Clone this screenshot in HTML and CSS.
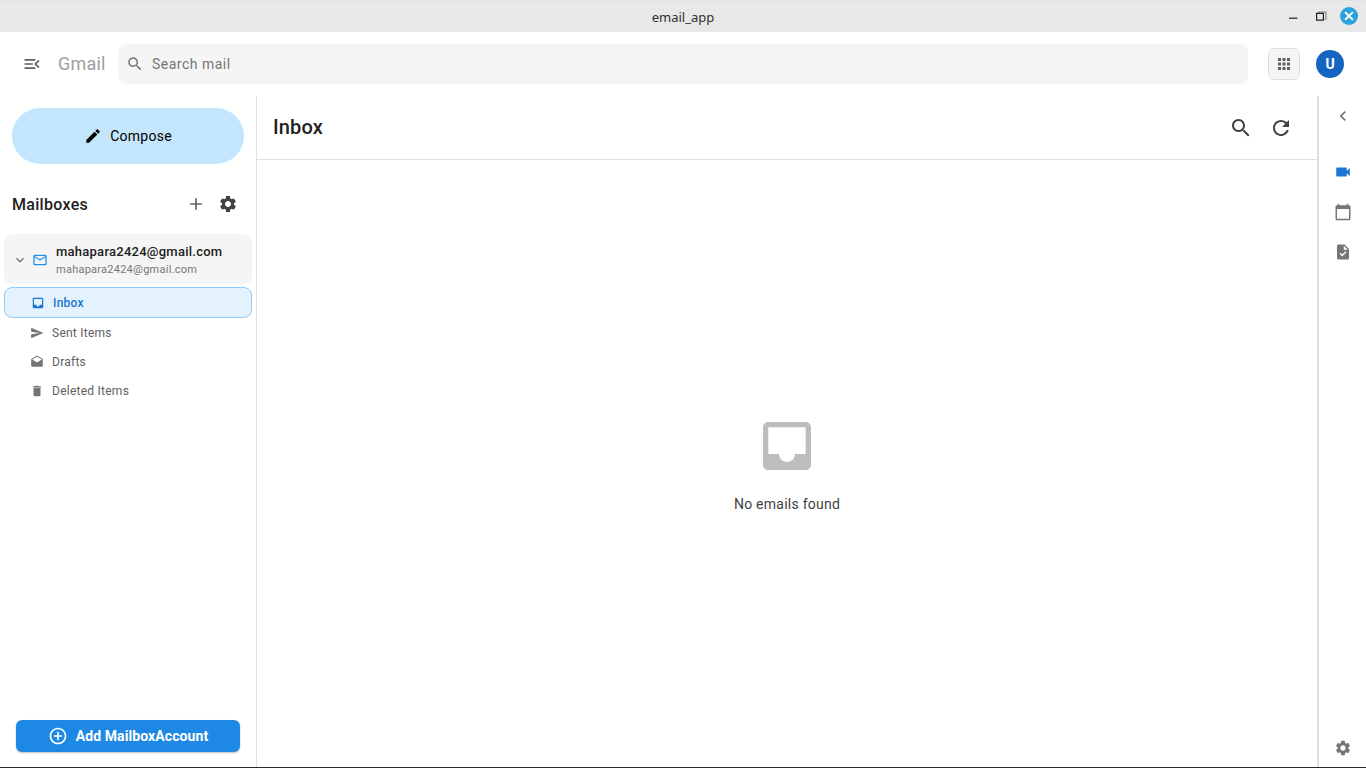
FILE: index.html
```html
<!DOCTYPE html>
<html lang="en">
<head>
    <meta charset="UTF-8">
    <meta name="viewport" content="width=device-width, initial-scale=1.0">
    <title>email_app</title>
    <link rel="stylesheet" href="styles.css">
</head>
<body>
    <div class="titlebar">
        <div class="title">email_app</div>
        <div class="window-controls">
            <svg class="win-icon" viewBox="0 0 16 16"><path d="M4 9.6h8.4v1.2H4z"/></svg>
            <svg class="win-icon" viewBox="0 0 16 16"><path d="M5.5 3.5h8v8h-2v-1h1v-6h-6v.5h-1z" fill="#777"/><path d="M3 4.8h8v8H3zM4.2 6v5.6h5.6V6z" fill-rule="evenodd"/></svg>
            <div class="win-close">
                <svg viewBox="0 0 24 24"><path d="M19 6.41L17.59 5 12 10.59 6.41 5 5 6.41 10.59 12 5 17.59 6.41 19 12 13.41 17.59 19 19 17.59 13.41 12z"/></svg>
            </div>
        </div>
    </div>

    <header class="appbar">
        <svg class="menu-icon" viewBox="0 0 24 24"><path d="M3 18h13v-2H3v2zm0-5h10v-2H3v2zm0-7v2h13V6H3zm18 9.59L17.42 12 21 8.41 19.59 7l-5 5 5 5L21 15.59z"/></svg>
        <div class="brand">Gmail</div>
        <div class="searchbox">
            <svg class="search-icon" viewBox="0 0 24 24"><path d="M15.5 14h-.79l-.28-.27C15.41 12.59 16 11.11 16 9.5 16 5.91 13.09 3 9.5 3S3 5.91 3 9.5 5.91 16 9.5 16c1.61 0 3.09-.59 4.23-1.57l.27.28v.79l5 4.99L20.49 19l-4.99-5zm-6 0C7.01 14 5 11.99 5 9.5S7.01 5 9.5 5 14 7.01 14 9.5 11.99 14 9.5 14z"/></svg>
            <span>Search mail</span>
        </div>
        <div class="apps-button">
            <svg viewBox="0 0 24 24"><path d="M4 8h4V4H4v4zm6 12h4v-4h-4v4zm-6 0h4v-4H4v4zm0-6h4v-4H4v4zm6 0h4v-4h-4v4zm6-10v4h4V4h-4zm-6 4h4V4h-4v4zm6 6h4v-4h-4v4zm0 6h4v-4h-4v4z"/></svg>
        </div>
        <div class="avatar">U</div>
    </header>

    <div class="content">
        <aside class="sidebar">
            <div class="compose">
                <svg viewBox="0 0 24 24"><path d="M3 17.25V21h3.75L17.81 9.94l-3.75-3.75L3 17.25zM20.71 7.04c.39-.39.39-1.02 0-1.41l-2.34-2.34c-.39-.39-1.02-.39-1.41 0l-1.83 1.83 3.75 3.75 1.83-1.83z"/></svg>
                <span>Compose</span>
            </div>

            <div class="mailboxes-head">
                <div class="mailboxes-title">Mailboxes</div>
                <svg class="head-icon head-add" viewBox="0 0 24 24"><path d="M19 13h-6v6h-2v-6H5v-2h6V5h2v6h6v2z"/></svg>
                <svg class="head-icon" viewBox="0 0 24 24"><path d="M19.14 12.94c.04-.3.06-.61.06-.94 0-.32-.02-.64-.07-.94l2.03-1.58c.18-.14.23-.41.12-.61l-1.92-3.32c-.12-.22-.37-.29-.59-.22l-2.39.96c-.5-.38-1.03-.7-1.62-.94l-.36-2.54c-.04-.24-.24-.41-.48-.41h-3.84c-.24 0-.43.17-.47.41l-.36 2.54c-.59.24-1.13.57-1.62.94l-2.39-.96c-.22-.08-.47 0-.59.22L2.74 8.87c-.12.21-.08.47.12.61l2.03 1.58c-.05.3-.09.63-.09.94s.02.64.07.94l-2.03 1.58c-.18.14-.23.41-.12.61l1.92 3.32c.12.22.37.29.59.22l2.39-.96c.5.38 1.03.7 1.62.94l.36 2.54c.05.24.24.41.48.41h3.84c.24 0 .44-.17.47-.41l.36-2.54c.59-.24 1.13-.56 1.62-.94l2.39.96c.22.08.47 0 .59-.22l1.92-3.32c.12-.22.07-.47-.12-.61l-2.01-1.58zM12 15.6c-1.98 0-3.6-1.62-3.6-3.6s1.62-3.6 3.6-3.6 3.6 1.62 3.6 3.6-1.62 3.6-3.6 3.6z"/></svg>
            </div>

            <div class="account">
                <svg class="account-chevron" viewBox="0 0 24 24"><path d="M16.59 8.59L12 13.17 7.41 8.59 6 10l6 6 6-6z"/></svg>
                <svg class="account-mail" viewBox="0 0 24 24"><path d="M20 4H4c-1.1 0-1.99.9-1.99 2L2 18c0 1.1.9 2 2 2h16c1.1 0 2-.9 2-2V6c0-1.1-.9-2-2-2zm0 14H4V8l8 5 8-5v10zm-8-7L4 6h16l-8 5z"/></svg>
                <div class="account-text">
                    <div class="account-name">mahapara2424@gmail.com</div>
                    <div class="account-email">mahapara2424@gmail.com</div>
                </div>
            </div>

            <div class="folder-active">
                <svg viewBox="0 0 24 24"><path d="M19 3H4.99c-1.11 0-1.98.89-1.98 2L3 19c0 1.1.88 2 1.99 2H19c1.1 0 2-.9 2-2V5c0-1.11-.9-2-2-2zm0 12h-4c0 1.66-1.35 3-3 3s-3-1.34-3-3H4.99V5H19v10z"/></svg>
                <span>Inbox</span>
            </div>
            <ul class="folders">
                <li>
                    <svg viewBox="0 0 24 24"><path d="M2.01 21L23 12 2.01 3 2 10l15 2-15 2z"/></svg>
                    <span>Sent Items</span>
                </li>
                <li>
                    <svg viewBox="0 0 24 24"><path d="M21.99 8c0-.72-.37-1.35-.94-1.7L12 1 2.95 6.3C2.38 6.65 2 7.28 2 8v10c0 1.1.9 2 2 2h16c1.1 0 2-.9 2-2l-.01-10zM12 13L3.74 7.84 12 3l8.26 4.84L12 13z"/></svg>
                    <span>Drafts</span>
                </li>
                <li>
                    <svg viewBox="0 0 24 24"><path d="M6 19c0 1.1.9 2 2 2h8c1.1 0 2-.9 2-2V7H6v12zM19 4h-3.5l-1-1h-5l-1 1H5v2h14V4z"/></svg>
                    <span>Deleted Items</span>
                </li>
            </ul>

            <div class="add-account">
                <svg viewBox="0 0 24 24"><path d="M13 7h-2v4H7v2h4v4h2v-4h4v-2h-4V7zm-1-5C6.48 2 2 6.48 2 12s4.48 10 10 10 10-4.48 10-10S17.52 2 12 2zm0 18c-4.41 0-8-3.59-8-8s3.59-8 8-8 8 3.59 8 8-3.59 8-8 8z"/></svg>
                <span>Add MailboxAccount</span>
            </div>
        </aside>

        <main class="main">
            <div class="main-head">
                <h1>Inbox</h1>
                <svg class="icon" viewBox="0 0 24 24"><path d="M15.5 14h-.79l-.28-.27C15.41 12.59 16 11.11 16 9.5 16 5.91 13.09 3 9.5 3S3 5.91 3 9.5 5.91 16 9.5 16c1.61 0 3.09-.59 4.23-1.57l.27.28v.79l5 4.99L20.49 19l-4.99-5zm-6 0C7.01 14 5 11.99 5 9.5S7.01 5 9.5 5 14 7.01 14 9.5 11.99 14 9.5 14z"/></svg>
                <svg class="icon" viewBox="0 0 24 24"><path d="M17.65 6.35C16.2 4.9 14.21 4 12 4c-4.42 0-7.99 3.58-7.99 8s3.57 8 7.99 8c3.73 0 6.84-2.55 7.73-6h-2.08c-.82 2.33-3.04 4-5.65 4-3.31 0-6-2.69-6-6s2.69-6 6-6c1.66 0 3.14.69 4.22 1.78L13 11h7V4l-2.35 2.35z"/></svg>
            </div>
            <div class="empty">
                <svg viewBox="0 0 24 24"><path d="M19 3H4.99c-1.11 0-1.98.89-1.98 2L3 19c0 1.1.88 2 1.99 2H19c1.1 0 2-.9 2-2V5c0-1.11-.9-2-2-2zm0 12h-4c0 1.66-1.35 3-3 3s-3-1.34-3-3H4.99V5H19v10z"/></svg>
                <div>No emails found</div>
            </div>
        </main>

        <aside class="rail">
            <svg class="rail-back" viewBox="0 0 24 24"><path d="M15.41 7.41L14 6l-6 6 6 6 1.41-1.41L10.83 12z"/></svg>
            <svg class="rail-video" viewBox="0 0 24 24"><path d="M17 10.5V7c0-.55-.45-1-1-1H4c-.55 0-1 .45-1 1v10c0 .55.45 1 1 1h12c.55 0 1-.45 1-1v-3.5l4 4v-11l-4 4z"/></svg>
            <svg viewBox="0 0 24 24"><path d="M20 3h-1V1h-2v2H7V1H5v2H4c-1.1 0-2 .9-2 2v16c0 1.1.9 2 2 2h16c1.1 0 2-.9 2-2V5c0-1.1-.9-2-2-2zm0 18H4V8h16v13z"/></svg>
            <svg viewBox="0 0 24 24"><path d="M14 2H6c-1.1 0-1.99.9-1.99 2L4 20c0 1.1.89 2 1.99 2H18c1.1 0 2-.9 2-2V8l-6-6zm-3.06 16L7.4 14.46l1.41-1.41 2.12 2.12 4.24-4.24 1.41 1.41L10.94 18zM13 9V3.5L18.5 9H13z"/></svg>
            <svg class="rail-settings" viewBox="0 0 24 24"><path d="M19.14 12.94c.04-.3.06-.61.06-.94 0-.32-.02-.64-.07-.94l2.03-1.58c.18-.14.23-.41.12-.61l-1.92-3.32c-.12-.22-.37-.29-.59-.22l-2.39.96c-.5-.38-1.03-.7-1.62-.94l-.36-2.54c-.04-.24-.24-.41-.48-.41h-3.84c-.24 0-.43.17-.47.41l-.36 2.54c-.59.24-1.13.57-1.62.94l-2.39-.96c-.22-.08-.47 0-.59.22L2.74 8.87c-.12.21-.08.47.12.61l2.03 1.58c-.05.3-.09.63-.09.94s.02.64.07.94l-2.03 1.58c-.18.14-.23.41-.12.61l1.92 3.32c.12.22.37.29.59.22l2.39-.96c.5.38 1.03.7 1.62.94l.36 2.54c.05.24.24.41.48.41h3.84c.24 0 .44-.17.47-.41l.36-2.54c.59-.24 1.13-.56 1.62-.94l2.39.96c.22.08.47 0 .59-.22l1.92-3.32c.12-.22.07-.47-.12-.61l-2.01-1.58zM12 15.6c-1.98 0-3.6-1.62-3.6-3.6s1.62-3.6 3.6-3.6 3.6 1.62 3.6 3.6-1.62 3.6-3.6 3.6z"/></svg>
        </aside>
    </div>
</body>
</html>
```

FILE: styles.css
```css
* {
    box-sizing: border-box;
}

body {
    margin: 0;
    height: 768px;
    overflow: hidden;
    display: flex;
    flex-direction: column;
    background: #fff;
    font-family: Roboto, Arial, sans-serif;
    color: #212121;
    border-bottom: 1px solid #2a2a2a;
}

svg {
    display: block;
    flex: none;
    fill: currentColor;
}

/* window title bar */
.titlebar {
    height: 32px;
    flex: none;
    background: #e8e8e8;
    border-top: 1px solid #e2e2e2;
    display: flex;
    align-items: center;
    justify-content: center;
    position: relative;
}

.title {
    font-family: "Noto Sans", Arial, sans-serif;
    font-size: 13px;
    color: #303030;
}

.window-controls {
    position: absolute;
    top: 6px;
    right: 8px;
    display: flex;
    align-items: center;
    gap: 12px;
}

.win-icon {
    width: 16px;
    height: 16px;
    color: #222;
}

.win-close {
    width: 18px;
    height: 18px;
    margin-left: -1px;
    border-radius: 50%;
    background: #2aa3dd;
    color: #fff;
    display: flex;
    align-items: center;
    justify-content: center;
}

.win-close svg {
    width: 14px;
    height: 14px;
    stroke: currentColor;
    stroke-width: 1.6;
}

/* top bar */
.appbar {
    height: 64px;
    flex: none;
    display: flex;
    align-items: center;
    padding: 0 22px 0 22px;
}

.icon {
    width: 24px;
    height: 24px;
    color: #424242;
}

.menu-icon {
    width: 20px;
    height: 20px;
    color: #616161;
}

.brand {
    margin: 0 0 2px 16px;
    width: 60px;
    font-size: 18px;
    letter-spacing: 0.2px;
    color: #9e9e9e;
}

.searchbox {
    width: 1130px;
    height: 40px;
    background: #f5f5f5;
    border-radius: 8px;
    display: flex;
    align-items: center;
    padding-left: 8px;
    gap: 8px;
    font-size: 14px;
    letter-spacing: 0.5px;
    color: #757575;
}

.search-icon {
    width: 18px;
    height: 18px;
}

.apps-button {
    width: 32px;
    height: 32px;
    margin-left: 20px;
    background: #f5f5f5;
    border: 1px solid #e0e0e0;
    border-radius: 6px;
    color: #616161;
    display: flex;
    align-items: center;
    justify-content: center;
}

.apps-button svg {
    width: 18px;
    height: 18px;
}

.avatar {
    width: 28px;
    height: 28px;
    margin-left: 16px;
    border-radius: 50%;
    background: #1565c0;
    color: #fff;
    font-size: 14px;
    font-weight: 700;
    display: flex;
    align-items: center;
    justify-content: center;
}

.content {
    flex: 1;
    min-height: 0;
    display: flex;
}

/* left column */
.sidebar {
    width: 257px;
    flex: none;
    border-right: 1px solid #e0e0e0;
    padding: 12px 4px 15px;
    display: flex;
    flex-direction: column;
}

.compose {
    height: 56px;
    margin: 0 8px;
    border-radius: 28px;
    background: #c4e6fd;
    color: #000;
    font-size: 14px;
    letter-spacing: 0.25px;
    display: flex;
    align-items: center;
    justify-content: center;
    gap: 8px;
}

.compose svg {
    width: 18px;
    height: 18px;
}

.mailboxes-head {
    display: flex;
    align-items: center;
    height: 32px;
    margin: 24px 0 14px;
    padding: 0 14px 0 8px;
    gap: 12px;
    color: #424242;
}

.mailboxes-title {
    flex: 1;
    font-size: 16px;
    font-weight: 500;
    letter-spacing: 0.3px;
    color: #212121;
}

.head-icon {
    width: 20px;
    height: 20px;
}

.head-add {
    color: #616161;
}

.account {
    height: 50px;
    background: #f5f5f5;
    border-radius: 8px;
    display: flex;
    align-items: center;
    padding: 1px 0 0 8px;
}

.account-chevron {
    width: 16px;
    height: 16px;
    color: #757575;
}

.account-mail {
    width: 16px;
    height: 16px;
    margin-left: 4px;
    margin-right: 8px;
    color: #2196f3;
}

.account-text {
    margin-top: 2px;
}

.account-name {
    font-size: 13px;
    font-weight: 500;
    letter-spacing: 0.25px;
    line-height: 18px;
    color: #212121;
}

.account-email {
    margin-top: 1px;
    font-size: 11px;
    letter-spacing: 0.25px;
    line-height: 16px;
    color: #757575;
}

.folder-active {
    height: 31px;
    margin-top: 3px;
    background: #e3f2fd;
    border: 1px solid #90caf9;
    border-radius: 8px;
    display: flex;
    align-items: center;
    padding-left: 26px;
    gap: 8px;
    color: #1976d2;
    font-size: 12px;
    font-weight: 500;
    letter-spacing: 0.25px;
}

.folder-active svg {
    width: 14px;
    height: 14px;
}

.folders {
    list-style: none;
    margin: 0;
    padding: 0;
}

.folders li {
    height: 29px;
    display: flex;
    align-items: center;
    padding-left: 26px;
    gap: 8px;
    font-size: 12px;
    letter-spacing: 0.25px;
    color: #616161;
}

.folders svg {
    width: 14px;
    height: 14px;
    color: #757575;
}

.add-account {
    height: 32px;
    margin: auto 12px 0;
    background: #1e88e5;
    border-radius: 6px;
    box-shadow: 0 1px 2px rgba(0, 0, 0, 0.25);
    color: #fff;
    font-size: 14px;
    font-weight: 700;
    letter-spacing: 0.1px;
    display: flex;
    align-items: center;
    justify-content: center;
    gap: 8px;
}

.add-account svg {
    width: 20px;
    height: 20px;
}

/* message area */
.main {
    flex: 1;
    min-width: 0;
    display: flex;
    flex-direction: column;
}

.main-head {
    height: 64px;
    flex: none;
    border-bottom: 1px solid #e0e0e0;
    display: flex;
    align-items: center;
    padding: 0 24px 0 16px;
    gap: 16px;
}

.main-head h1 {
    flex: 1;
    margin: 0 0 2px;
    font-size: 20px;
    font-weight: 500;
    letter-spacing: 0.15px;
    color: #212121;
}

.empty {
    flex: 1;
    display: flex;
    flex-direction: column;
    align-items: center;
    justify-content: center;
    gap: 16px;
    font-size: 14px;
    letter-spacing: 0.25px;
    line-height: 20px;
    color: #424242;
}

.empty svg {
    width: 64px;
    height: 64px;
    color: #bdbdbd;
}

/* right rail */
.rail {
    width: 49px;
    flex: none;
    border-left: 2px solid #e0e0e0;
    display: flex;
    flex-direction: column;
    align-items: center;
    gap: 22px;
    padding: 10px 0 10px;
    color: #757575;
}

.rail svg {
    width: 18px;
    height: 18px;
}

.rail .rail-back {
    width: 20px;
    height: 20px;
    margin-bottom: 15px;
}

.rail .rail-video {
    color: #1976d2;
}

.rail .rail-settings {
    margin-top: auto;
}
```
